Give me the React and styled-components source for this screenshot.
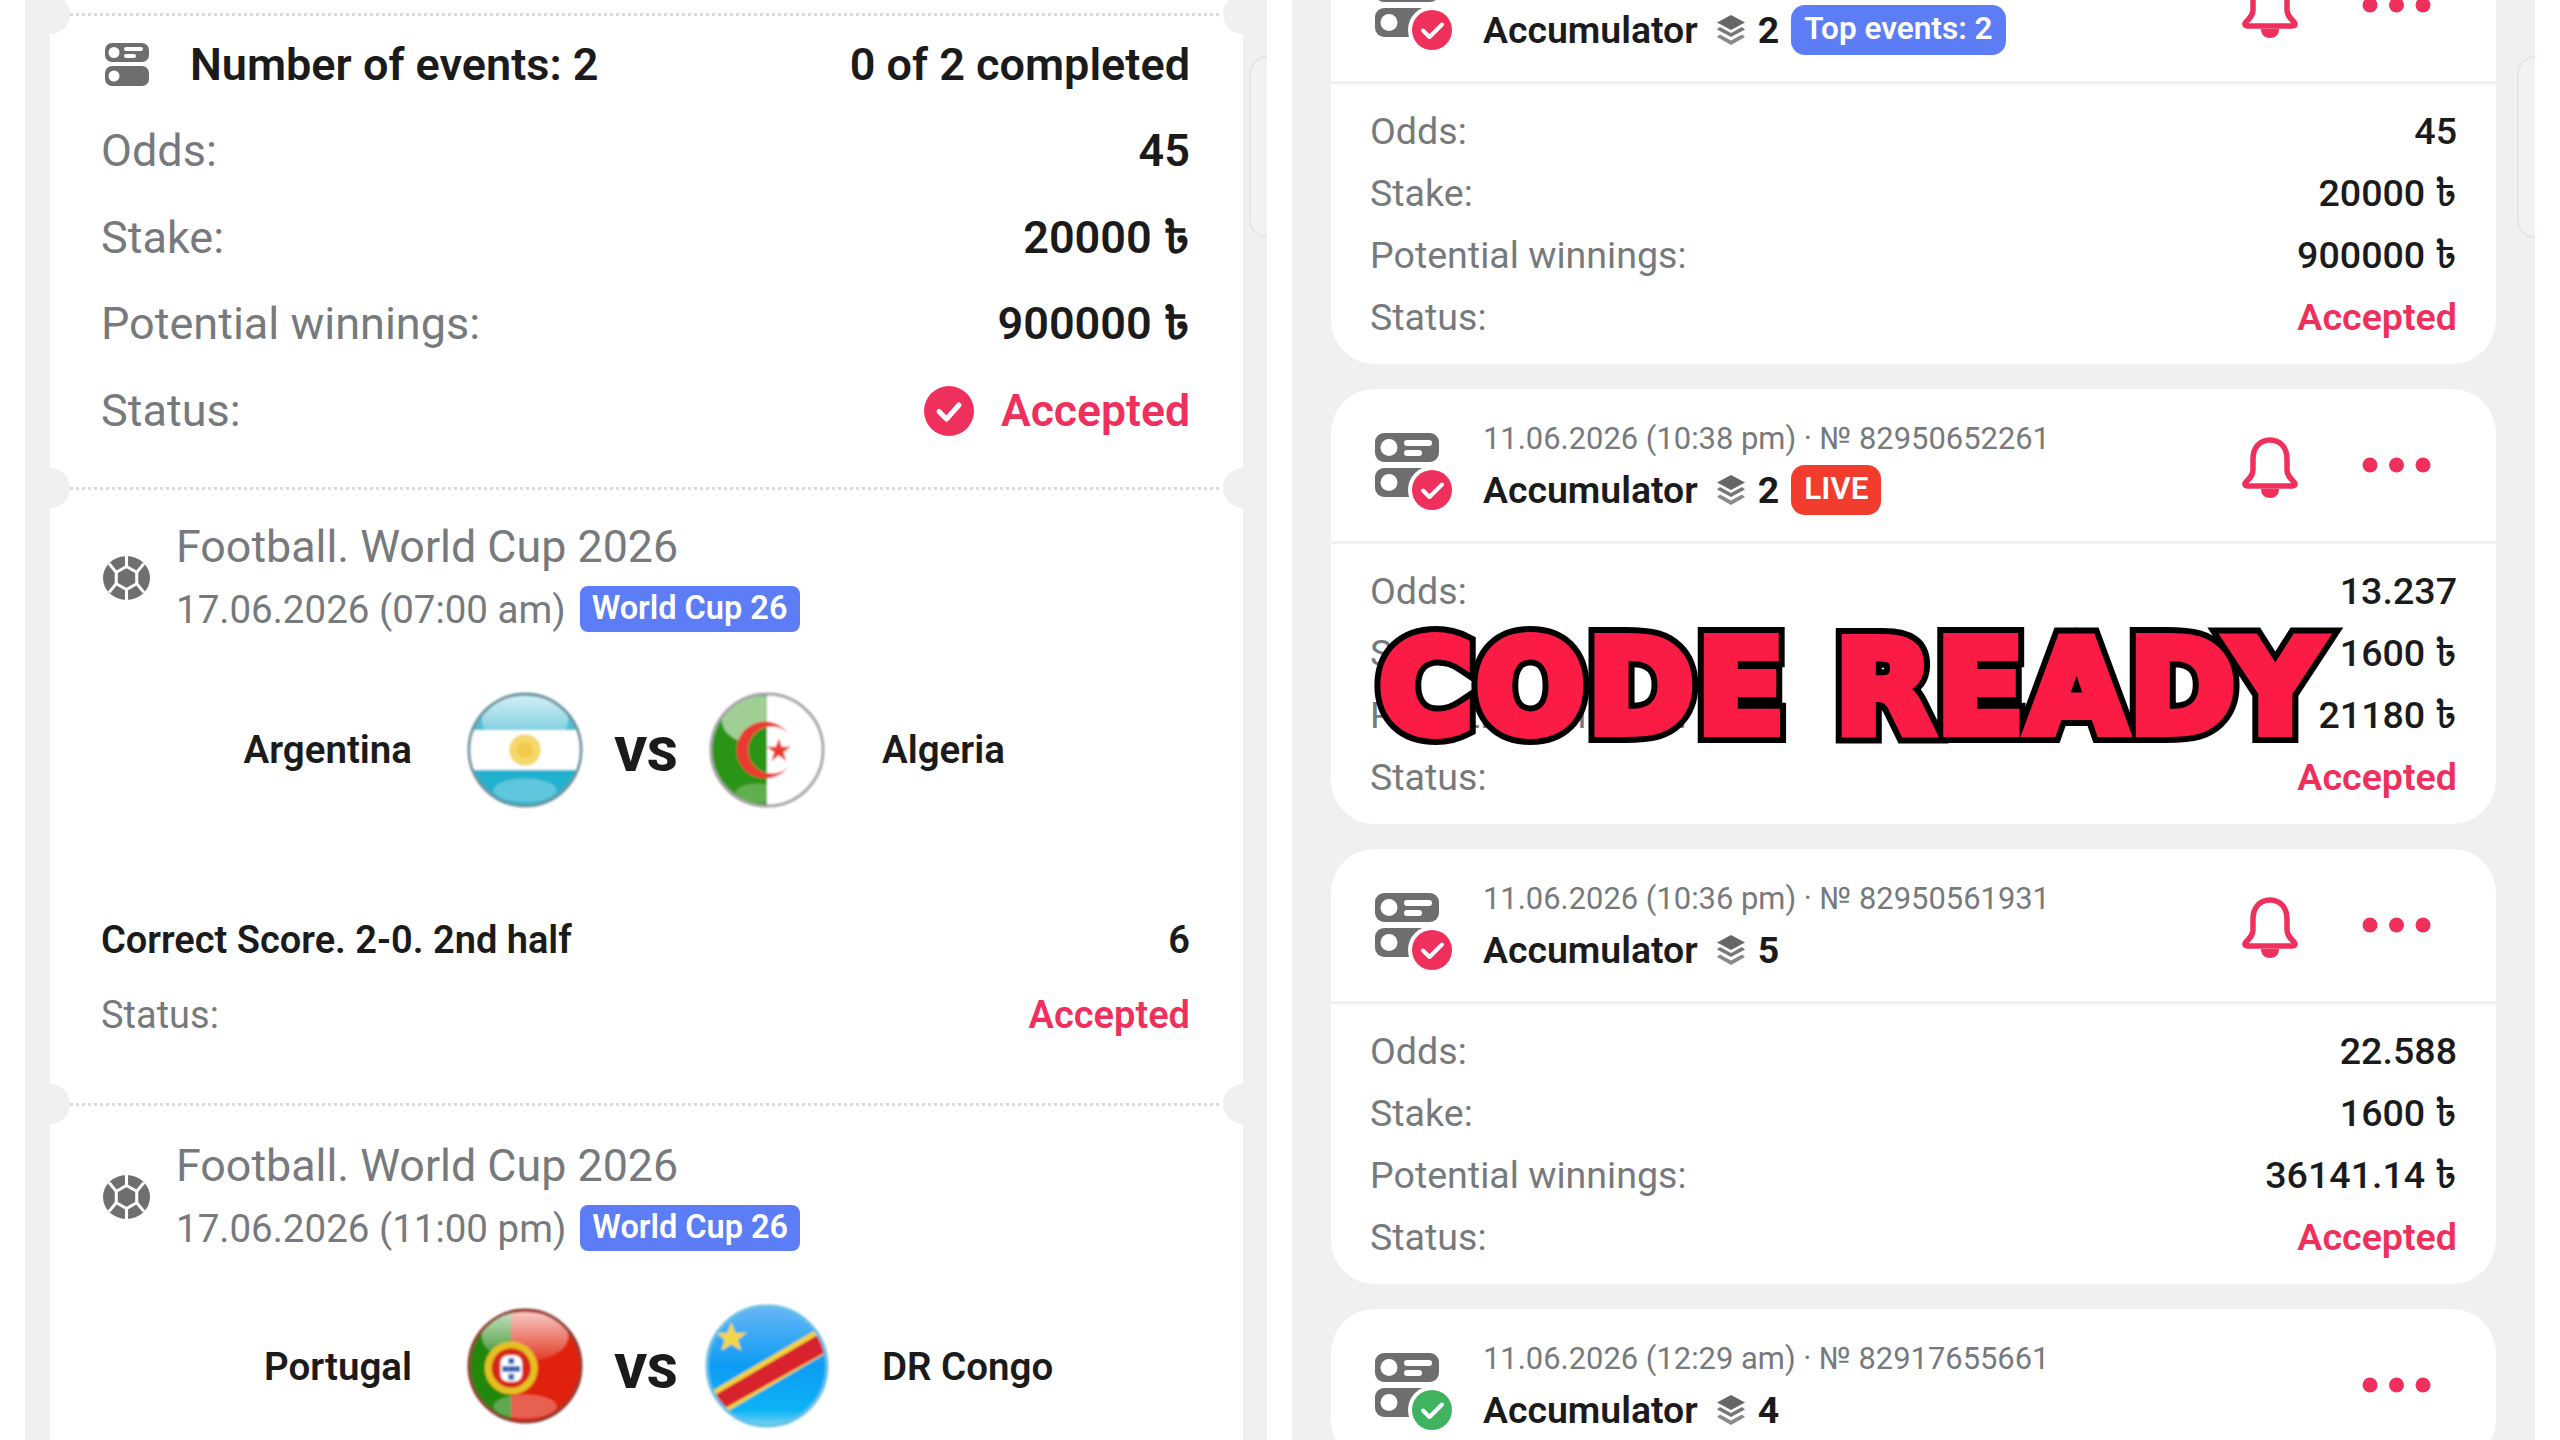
import React from "react";
import styled, { createGlobalStyle } from "styled-components";

const GREY_BG = "#eef0f2";
const RED = "#f0305c";
const INK = "#1b1b1b";
const MUTED = "#777a7d";

const GlobalStyle = createGlobalStyle`
  html, body { margin: 0; padding: 0; background: #fff; }
  body { font-family: Roboto, "Noto Sans", "Noto Sans Bengali", sans-serif; }
`;

const Screen = styled.div`
  position: relative;
  width: 2560px;
  height: 1440px;
  overflow: hidden;
  background: #fff;
  display: grid;
  grid-template-columns: 1242px 1243px;
  column-gap: 25px;
  padding-left: 25px;
  box-sizing: border-box;
`;

const Panel = styled.div`
  position: relative;
  height: 1440px;
  overflow: hidden;
  background: ${GREY_BG};
`;

const SidePeek = styled.div`
  position: absolute;
  right: 0;
  top: 56px;
  width: 18px;
  height: 182px;
  background: #f1f2f4;
  border: 2px solid #e4e6e9;
  border-right: 0;
  border-radius: 18px 0 0 18px;
  box-sizing: border-box;
`;

/* left: the open coupon */
const Ticket = styled.div`
  margin: 0 24px 0 25px;
  padding-top: 13px;
  background: #fff;
  min-height: 1440px;
  box-sizing: border-box;
`;

const Perforation = styled.div`
  position: relative;
  height: 0;
  margin: 0 24px 0 20px;
  border-top: 3px dotted #d9dbdf;

  &::before,
  &::after {
    content: "";
    position: absolute;
    top: -22px;
    width: 40px;
    height: 40px;
    border-radius: 50%;
    background: ${GREY_BG};
  }
  &::before { left: -40px; }
  &::after { right: -44px; }
`;

const Section = styled.section`
  padding: ${(p) => p.$top}px 53px ${(p) => p.$bottom}px 51px;
`;

const SummaryHead = styled.div`
  display: flex;
  align-items: center;
  height: 86px;
  font-size: 45px;
  line-height: 54px;
  font-weight: 600;
  color: ${INK};
`;

const SummaryTitle = styled.span`
  margin-left: 41px;
  flex: 1;
`;

const BigRow = styled.div`
  display: flex;
  align-items: center;
  justify-content: space-between;
  height: 86.5px;
  font-size: 45px;
  line-height: 54px;
  color: ${MUTED};
`;

const BigValue = styled.span`
  display: flex;
  align-items: center;
  gap: 27px;
  font-weight: 600;
  font-size: ${(p) => (p.$red ? "44.5px" : "45px")};
  color: ${(p) => (p.$red ? RED : INK)};
`;

const EventHead = styled.div`
  display: flex;
  align-items: center;
  gap: 26px;
  color: ${MUTED};
`;

const EventLines = styled.div`
  display: flex;
  flex-direction: column;
`;

const League = styled.div`
  height: 62px;
  line-height: 62px;
  font-size: 44.8px;
`;

const EventDate = styled.div`
  display: flex;
  align-items: center;
  gap: 14px;
  height: 62px;
  font-size: 38.5px;
`;

const Tag = styled.span`
  display: inline-block;
  padding: 0 12px;
  height: 46px;
  line-height: 45px;
  border-radius: 8px;
  background: #5c7df6;
  color: #fff;
  font-size: 32.5px;
  font-weight: 600;
  white-space: nowrap;
`;

const Matchup = styled.div`
  display: grid;
  grid-template-columns: 359px 130px 112px 130px 1fr;
  align-items: center;
  height: 125px;
  margin-top: ${(p) => p.$gap}px;
`;

const TeamName = styled.span`
  font-size: 38.5px;
  font-weight: 600;
  color: ${INK};
  text-align: ${(p) => (p.$away ? "left" : "right")};
  padding: ${(p) => (p.$away ? "0 0 0 50px" : "0 48px 0 0")};
`;

const FlagCell = styled.div`
  display: flex;
  align-items: center;
  justify-content: center;
`;

const Versus = styled.span`
  font-size: 49px;
  font-weight: 900;
  color: ${INK};
  text-align: center;
  padding-top: 10px;
`;

const PickRow = styled.div`
  display: flex;
  align-items: center;
  justify-content: space-between;
  height: 75px;
  margin-top: ${(p) => p.$gap || 0}px;
  font-size: 38px;
  font-weight: ${(p) => (p.$strong ? 600 : 400)};
  color: ${(p) => (p.$strong ? INK : MUTED)};
`;

const PickStatus = styled.span`
  font-weight: 600;
  color: ${RED};
`;

/* right: the list of bets */
const Feed = styled.div`
  display: flex;
  flex-direction: column;
  gap: 25px;
  margin: -71px 39px 0 39px;
`;

const BetCard = styled.article`
  background: #fff;
  border-radius: 44px;
  overflow: hidden;
  flex-shrink: 0;
`;

const BetHeader = styled.header`
  display: flex;
  align-items: center;
  height: 152px;
  padding: 0 65px 0 44px;
  border-bottom: 3px solid ${GREY_BG};
`;

const BetInfo = styled.div`
  margin-left: 30px;
  flex: 1;
`;

const BetMeta = styled.div`
  height: 50px;
  line-height: 50px;
  font-size: 30.9px;
  color: ${MUTED};
`;

const BetTitle = styled.div`
  display: flex;
  align-items: center;
  height: 52px;
  font-size: 37.4px;
  font-weight: 600;
  color: ${INK};
`;

const TitleGap = styled.span`
  width: 18px;
`;

const LegCount = styled.span`
  margin: 0 12px 0 12px;
  font-weight: 700;
`;

const Pill = styled.span`
  height: 50px;
  line-height: 48px;
  padding: 0 13px;
  border-radius: 14px;
  background: ${(p) => (p.$live ? "#f23c2e" : "#5c7df6")};
  color: #fff;
  font-size: 31.5px;
  font-weight: 600;
`;

const Actions = styled.div`
  display: flex;
  align-items: center;
  gap: 63px;
`;

const BetBody = styled.div`
  padding: 16px 39px 16px;
`;

const BetRow = styled.div`
  display: flex;
  align-items: center;
  justify-content: space-between;
  height: 62px;
  font-size: 37.6px;
  line-height: 46px;
  color: ${MUTED};
`;

const BetValue = styled.span`
  font-weight: ${(p) => (p.$red ? 600 : 500)};
  color: ${(p) => (p.$red ? RED : INK)};
`;

const Stamp = styled.div`
  position: absolute;
  left: 1379px;
  top: 603px;
  font-family: "DejaVu Sans", sans-serif;
  font-weight: 700;
  font-size: 128px;
  line-height: 170px;
  white-space: nowrap;
  letter-spacing: 3px;
  color: #000;
  -webkit-text-stroke: 22px #000;

  &::after {
    content: attr(data-label);
    position: absolute;
    left: 0;
    top: 0;
    color: #fb1c46;
    -webkit-text-stroke: 10px #fb1c46;
  }
`;

const CouponIcon = () => (
  <svg width="44" height="44" viewBox="0 0 44 44" style={{ flexShrink: 0, marginLeft: 4 }}>
    <rect x="0" y="0" width="44" height="19" rx="7" fill="#6e6e6e" />
    <circle cx="9" cy="9.5" r="5.5" fill="#fff" />
    <rect x="19" y="4" width="19" height="4" rx="2" fill="#fff" />
    <rect x="19" y="11" width="12" height="4" rx="2" fill="#fff" />
    <rect x="0" y="23" width="44" height="20" rx="7" fill="#6e6e6e" />
    <circle cx="9" cy="33" r="5.5" fill="#fff" />
  </svg>
);

const BetIcon = ({ color }) => (
  <svg width="78" height="80" viewBox="0 0 78 80" style={{ flexShrink: 0, marginTop: 16 }}>
    <rect x="0" y="0" width="64" height="29" rx="9" fill="#6e6e6e" />
    <circle cx="14" cy="14.5" r="8.5" fill="#fff" />
    <rect x="29" y="7" width="28" height="6" rx="3" fill="#fff" />
    <rect x="29" y="17" width="18" height="6" rx="3" fill="#fff" />
    <rect x="0" y="35" width="64" height="29" rx="9" fill="#6e6e6e" />
    <circle cx="14" cy="49.5" r="8.5" fill="#fff" />
    <circle cx="57" cy="57" r="24" fill="#fff" />
    <circle cx="57" cy="57" r="20" fill={color} />
    <path d="M48 57.5l6.5 6.5L67 51.5" fill="none" stroke="#fff" strokeWidth="4" strokeLinecap="round" strokeLinejoin="round" />
  </svg>
);

const CheckBadge = () => (
  <svg width="50" height="50" viewBox="0 0 50 50">
    <circle cx="25" cy="25" r="25" fill={RED} />
    <path d="M15 25.5l7.5 7.5L35 19" fill="none" stroke="#fff" strokeWidth="5" strokeLinecap="round" strokeLinejoin="round" />
  </svg>
);

const BallIcon = () => (
  <svg width="47" height="44" viewBox="0 0 46 46" preserveAspectRatio="none" style={{ flexShrink: 0, marginLeft: 2 }}>
    <circle cx="23" cy="23" r="23" fill="#6f6f6f" />
    <g fill="none" stroke="#fff" strokeWidth="3">
      <path d="M23 11l10 6v12l-10 6-10-6V17z" />
      <path d="M23 11V0M33 17l7-9M33 29l7 9M23 35v11M13 29l-7 9M13 17L6 8" />
    </g>
  </svg>
);

const BellIcon = () => (
  <svg width="58" height="62" viewBox="0 0 58 62" style={{ marginTop: 6 }}>
    <path
      d="M29 3C18 3 12 11.5 12 22v11c0 5-3 8-7 12-2 2-1 4 2 4h44c3 0 4-2 2-4-4-4-7-7-7-12V22C46 11.5 40 3 29 3z"
      fill="none"
      stroke={RED}
      strokeWidth="5.5"
      strokeLinejoin="round"
    />
    <path d="M20 52h18c0 6-4 9-9 9s-9-3-9-9z" fill={RED} />
  </svg>
);

const DotsIcon = () => (
  <svg width="69" height="16" viewBox="0 0 69 16">
    <circle cx="8" cy="8" r="7.5" fill={RED} />
    <circle cx="34.5" cy="8" r="7.5" fill={RED} />
    <circle cx="61" cy="8" r="7.5" fill={RED} />
  </svg>
);

const LayersIcon = () => (
  <svg width="30" height="30" viewBox="0 0 30 30" style={{ flexShrink: 0 }}>
    <path d="M15 0l14 7.5L15 15 1 7.5z" fill="#666" />
    <path d="M4 12l11 6 11-6 3 2.5-14 7.5L1 14.5z" fill="#777" />
    <path d="M4 19.5l11 6 11-6 3 2.5L15 30 1 22z" fill="#8a8a8a" />
  </svg>
);

const Gloss = ({ id }) => (
  <>
    <defs>
      <linearGradient id={id} x1="0" y1="0" x2="0" y2="1">
        <stop offset="0" stopColor="#fff" stopOpacity="0.75" />
        <stop offset="1" stopColor="#fff" stopOpacity="0.1" />
      </linearGradient>
    </defs>
    <ellipse cx="60" cy="30" rx="44" ry="25" fill={`url(#${id})`} />
    <ellipse cx="60" cy="101" rx="32" ry="12" fill="#fff" opacity="0.28" />
  </>
);

const FlagFrame = ({ id, size, rim, children }) => (
  <svg width={size} height={size} viewBox="0 0 120 120">
    <defs>
      <clipPath id={`${id}-clip`}>
        <circle cx="60" cy="60" r="57" />
      </clipPath>
      <filter id={`${id}-soft`}>
        <feGaussianBlur stdDeviation="1" />
      </filter>
    </defs>
    <g filter={`url(#${id}-soft)`}>
      <g clipPath={`url(#${id}-clip)`}>{children}</g>
      <circle cx="60" cy="60" r="57" fill="none" stroke={rim} strokeWidth="3" />
    </g>
  </svg>
);

const ArgentinaFlag = () => (
  <FlagFrame id="ar" size={118} rim="#6f959f">
    <rect width="120" height="120" fill="#fff" />
    <rect width="120" height="40" fill="#4fbdd4" />
    <rect y="80" width="120" height="40" fill="#22b2cf" />
    <Gloss id="ar-g" />
    <rect y="40" width="120" height="40" fill="#fff" />
    <circle cx="60" cy="60" r="16" fill="#f5d76a" />
    <circle cx="60" cy="60" r="8" fill="#f2ca4c" />
  </FlagFrame>
);

const AlgeriaFlag = () => (
  <FlagFrame id="dz" size={118} rim="#a4a4a4">
    <rect width="120" height="120" fill="#fff" />
    <rect width="60" height="120" fill="#2b9412" />
    <ellipse cx="54" cy="30" rx="40" ry="25" fill="#fff" opacity="0.55" />
    <ellipse cx="50" cy="104" rx="22" ry="10" fill="#fff" opacity="0.25" />
    <rect x="60" width="60" height="120" fill="#fff" />
    <circle cx="58" cy="60" r="29" fill="#ea3a30" />
    <circle cx="65" cy="60" r="24" fill="#fff" />
    <path d="M60 36.5A24 24 0 0 0 60 83.5Z" fill="#2b9412" />
    <path d="M72 48l3 8.800 9.300 0-7.500 5.500 2.900 8.900-7.700-5.500-7.700 5.500 2.900-8.900-7.500-5.500 9.300 0z" fill="#ea3a30" />
  </FlagFrame>
);

const PortugalFlag = () => (
  <FlagFrame id="pt" size={118} rim="#8f3a32">
    <rect width="120" height="120" fill="#e0240e" />
    <rect width="46" height="120" fill="#22870f" />
    <Gloss id="pt-g" />
    <circle cx="46" cy="62" r="27" fill="#e5c021" />
    <circle cx="46" cy="62" r="20" fill="#d6281b" />
    <rect x="35" y="49" width="22" height="27" rx="8" fill="#fff" />
    <g fill="#3a63b8">
      <rect x="43" y="52" width="6" height="6" />
      <rect x="37" y="60" width="6" height="6" />
      <rect x="43" y="60" width="6" height="6" />
      <rect x="49" y="60" width="6" height="6" />
      <rect x="43" y="68" width="6" height="6" />
    </g>
  </FlagFrame>
);

const CongoFlag = () => (
  <FlagFrame id="cd" size={126} rim="#67bfe6">
    <defs>
      <linearGradient id="cd-sky" x1="0" y1="0" x2="0" y2="1">
        <stop offset="0" stopColor="#6bb8f5" />
        <stop offset="0.5" stopColor="#0d9cf4" />
        <stop offset="0.85" stopColor="#0ab2f5" />
        <stop offset="1" stopColor="#8fdcf2" />
      </linearGradient>
    </defs>
    <rect width="120" height="120" fill="url(#cd-sky)" />
    <path d="M-6 92L126 14l10 22L4 114z" fill="#f0d33a" />
    <path d="M-4 96L126 20l6 18L2 110z" fill="#d8202e" />
    <path d="M26 18l4 10.500 11-.5-8.500 7 3 10.500L26 39.500 16.500 45.500l3-10.500L11 28l11 .5z" fill="#f3d64c" />
  </FlagFrame>
);

const BIG_ROWS = [
  ["Odds:", "45"],
  ["Stake:", "20000 ৳"],
  ["Potential winnings:", "900000 ৳"],
];

const BETS = [
  { meta: "", icon: RED, count: 2, pill: "Top events: 2", odds: "45", stake: "20000 ৳", win: "900000 ৳", bell: true },
  { meta: "11.06.2026 (10:38 pm) · № 82950652261", icon: RED, count: 2, pill: "LIVE", live: true, odds: "13.237", stake: "1600 ৳", win: "21180 ৳", bell: true },
  { meta: "11.06.2026 (10:36 pm) · № 82950561931", icon: RED, count: 5, odds: "22.588", stake: "1600 ৳", win: "36141.14 ৳", bell: true },
  { meta: "11.06.2026 (12:29 am) · № 82917655661", icon: "#3fb35f", count: 4 },
];

function BetItem({ bet }) {
  return (
    <BetCard>
      <BetHeader>
        <BetIcon color={bet.icon} />
        <BetInfo>
          <BetMeta>{bet.meta}</BetMeta>
          <BetTitle>
            Accumulator
            <TitleGap />
            <LayersIcon />
            <LegCount>{bet.count}</LegCount>
            {bet.pill && <Pill $live={bet.live}>{bet.pill}</Pill>}
          </BetTitle>
        </BetInfo>
        <Actions>
          {bet.bell && <BellIcon />}
          <DotsIcon />
        </Actions>
      </BetHeader>
      {bet.odds && (
        <BetBody>
          <BetRow>Odds:<BetValue>{bet.odds}</BetValue></BetRow>
          <BetRow>Stake:<BetValue>{bet.stake}</BetValue></BetRow>
          <BetRow>Potential winnings:<BetValue>{bet.win}</BetValue></BetRow>
          <BetRow>Status:<BetValue $red>Accepted</BetValue></BetRow>
        </BetBody>
      )}
    </BetCard>
  );
}

function EventBlock({ time, home, away, gap, HomeFlag, AwayFlag }) {
  return (
    <>
      <EventHead>
        <BallIcon />
        <EventLines>
          <League>Football. World Cup 2026</League>
          <EventDate>
            {time}
            <Tag>World Cup 26</Tag>
          </EventDate>
        </EventLines>
      </EventHead>
      <Matchup $gap={gap}>
        <TeamName>{home}</TeamName>
        <FlagCell><HomeFlag /></FlagCell>
        <Versus>VS</Versus>
        <FlagCell><AwayFlag /></FlagCell>
        <TeamName $away>{away}</TeamName>
      </Matchup>
    </>
  );
}

export default function App() {
  return (
    <Screen>
      <GlobalStyle />
      <Panel>
        <Ticket>
          <Perforation />
          <Section $top={6} $bottom={33}>
            <SummaryHead>
              <CouponIcon />
              <SummaryTitle>Number of events: 2</SummaryTitle>
              <span>0 of 2 completed</span>
            </SummaryHead>
            {BIG_ROWS.map(([label, value]) => (
              <BigRow key={label}>
                {label}
                <BigValue>{value}</BigValue>
              </BigRow>
            ))}
            <BigRow>
              Status:
              <BigValue $red>
                <CheckBadge />
                Accepted
              </BigValue>
            </BigRow>
          </Section>
          <Perforation />
          <Section $top={26} $bottom={51}>
            <EventBlock
              time="17.06.2026 (07:00 am)"
              home="Argentina"
              away="Algeria"
              gap={47}
              HomeFlag={ArgentinaFlag}
              AwayFlag={AlgeriaFlag}
            />
            <PickRow $strong $gap={90}>
              Correct Score. 2-0. 2nd half
              <span>6</span>
            </PickRow>
            <PickRow>
              Status:
              <PickStatus>Accepted</PickStatus>
            </PickRow>
          </Section>
          <Perforation />
          <Section $top={29} $bottom={0}>
            <EventBlock
              time="17.06.2026 (11:00 pm)"
              home="Portugal"
              away="DR Congo"
              gap={44}
              HomeFlag={PortugalFlag}
              AwayFlag={CongoFlag}
            />
          </Section>
        </Ticket>
        <SidePeek />
      </Panel>
      <Panel>
        <Feed>
          {BETS.map((bet) => (
            <BetItem key={bet.count + bet.meta} bet={bet} />
          ))}
        </Feed>
        <SidePeek />
      </Panel>
      <Stamp data-label="CODE READY">CODE READY</Stamp>
    </Screen>
  );
}
